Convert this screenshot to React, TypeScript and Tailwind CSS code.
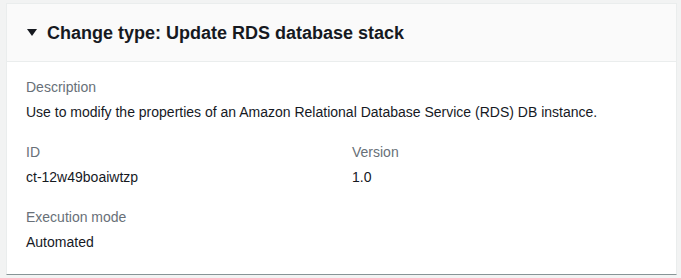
export default function App() {
  return (
    <div className="min-h-[278px] bg-[#f2f3f3] pt-[3px] pl-[6px] pr-[4px] font-['Liberation_Sans',Arial,sans-serif]">
      <section className="bg-white border-x border-t border-[#eaeded] border-b border-b-[#879596]">
        {/* Header */}
        <div className="h-[58px] bg-[#fafafa] border-b border-[#eaeded] flex items-center pl-[20px]">
          <svg width="10" height="8" viewBox="0 0 10 8" className="mr-[10px] mt-[1px]">
            <path d="M0 0 H10 L5 7 Z" fill="#16191f" />
          </svg>
          <h2 className="text-[18px] font-bold text-[#16191f] leading-[22px]">
            Change type: Update RDS database stack
          </h2>
        </div>

        {/* Body */}
        <div className="pl-[19px] pr-[20px] pt-[13px] pb-[19px] text-[14px] leading-[25px]">
          <div>
            <div className="text-[#687078]">Description</div>
            <div className="text-[#16191f]">
              Use to modify the properties of an Amazon Relational Database Service (RDS) DB instance.
            </div>
          </div>

          <div className="grid grid-cols-2 gap-x-[22px] mt-[15px]">
            <div>
              <div className="text-[#687078]">ID</div>
              <div className="text-[#16191f]">ct-12w49boaiwtzp</div>
            </div>
            <div>
              <div className="text-[#687078]">Version</div>
              <div className="text-[#16191f]">1.0</div>
            </div>
          </div>

          <div className="mt-[15px]">
            <div className="text-[#687078]">Execution mode</div>
            <div className="text-[#16191f]">Automated</div>
          </div>
        </div>
      </section>
    </div>
  );
}
